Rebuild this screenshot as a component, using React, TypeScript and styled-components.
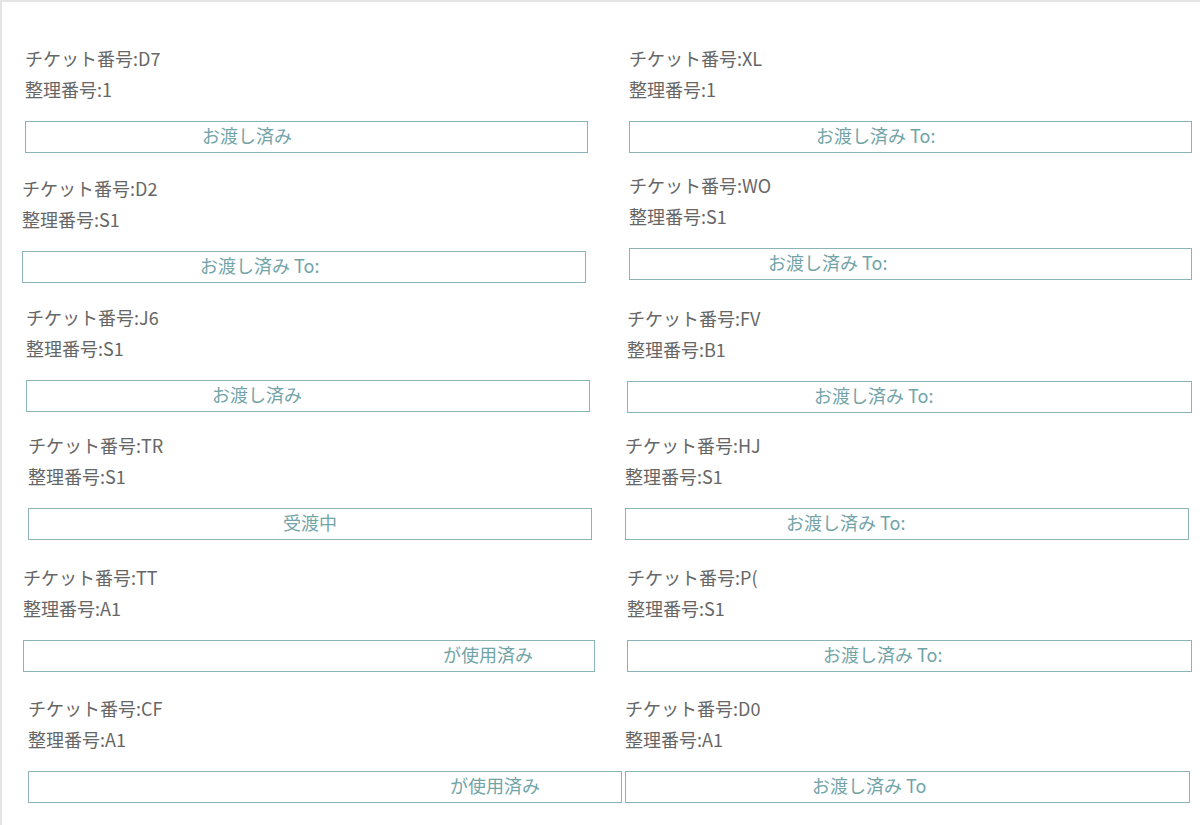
import styled, { createGlobalStyle } from "styled-components";

const GlobalStyle = createGlobalStyle`
  html, body {
    margin: 0;
    padding: 0;
    background: #ffffff;
  }
  * {
    box-sizing: border-box;
  }
`;

const Page = styled.div`
  width: 1200px;
  height: 825px;
  overflow: hidden;
  display: grid;
  grid-template-columns: 600px 600px;
  align-items: start;
  background: #ffffff;
  box-shadow: inset 2px 2px 0 #e4e4e4;
  font-family: "Noto Sans CJK JP", "Noto Sans", sans-serif;
`;

const Column = styled.div`
  display: flex;
  flex-direction: column;
  align-items: flex-start;
`;

const Card = styled.div<{ $top: number; $left: number }>`
  display: flex;
  flex-direction: column;
  margin-top: ${(p) => p.$top}px;
  margin-left: ${(p) => p.$left}px;
`;

const InfoLine = styled.div`
  height: 31px;
  line-height: 29px;
  font-size: 18px;
  color: #666666;
  white-space: nowrap;
`;

const StatusButton = styled.div<{ $width: number; $pad?: number }>`
  margin-top: 15px;
  height: 32px;
  width: ${(p) => p.$width}px;
  border: 1px solid #8bb4b8;
  background: #ffffff;
  display: flex;
  align-items: center;
  justify-content: ${(p) => (p.$pad === undefined ? "center" : "flex-start")};
  padding-left: ${(p) => (p.$pad === undefined ? 0 : p.$pad)}px;
  padding-bottom: 4px;
  color: #72a4a7;
  font-size: 18px;
  white-space: nowrap;
`;

type Ticket = {
  top: number;
  left: number;
  ticket: string;
  seat: string;
  width: number;
  label: string;
  pad?: number;
};

const leftTickets: Ticket[] = [
  { top: 44, left: 25, ticket: "チケット番号:D7", seat: "整理番号:1", width: 563, label: "お渡し済み", pad: 176 },
  { top: 21, left: 22, ticket: "チケット番号:D2", seat: "整理番号:S1", width: 564, label: "お渡し済み To:", pad: 177 },
  { top: 20, left: 26, ticket: "チケット番号:J6", seat: "整理番号:S1", width: 564, label: "お渡し済み", pad: 185 },
  { top: 19, left: 28, ticket: "チケット番号:TR", seat: "整理番号:S1", width: 564, label: "受渡中" },
  { top: 23, left: 23, ticket: "チケット番号:TT", seat: "整理番号:A1", width: 572, label: "が使用済み", pad: 419 },
  { top: 22, left: 28, ticket: "チケット番号:CF", seat: "整理番号:A1", width: 594, label: "が使用済み", pad: 421 },
];

const rightTickets: Ticket[] = [
  { top: 44, left: 29, ticket: "チケット番号:XL", seat: "整理番号:1", width: 563, label: "お渡し済み To:", pad: 186 },
  { top: 18, left: 29, ticket: "チケット番号:WO", seat: "整理番号:S1", width: 563, label: "お渡し済み To:", pad: 138 },
  { top: 24, left: 27, ticket: "チケット番号:FV", seat: "整理番号:B1", width: 565, label: "お渡し済み To:", pad: 186 },
  { top: 18, left: 25, ticket: "チケット番号:HJ", seat: "整理番号:S1", width: 564, label: "お渡し済み To:", pad: 160 },
  { top: 23, left: 27, ticket: "チケット番号:P(", seat: "整理番号:S1", width: 565, label: "お渡し済み To:", pad: 195 },
  { top: 22, left: 25, ticket: "チケット番号:D0", seat: "整理番号:A1", width: 565, label: "お渡し済み To", pad: 186 },
];

const TicketCard = ({ t }: { t: Ticket }) => (
  <Card $top={t.top} $left={t.left}>
    <InfoLine>{t.ticket}</InfoLine>
    <InfoLine>{t.seat}</InfoLine>
    <StatusButton $width={t.width} $pad={t.pad}>
      {t.label}
    </StatusButton>
  </Card>
);

const App = () => {
  return (
    <>
      <GlobalStyle />
      <Page>
        <Column>
          {leftTickets.map((t, i) => (
            <TicketCard key={i} t={t} />
          ))}
        </Column>
        <Column>
          {rightTickets.map((t, i) => (
            <TicketCard key={i} t={t} />
          ))}
        </Column>
      </Page>
    </>
  );
};

export default App;
